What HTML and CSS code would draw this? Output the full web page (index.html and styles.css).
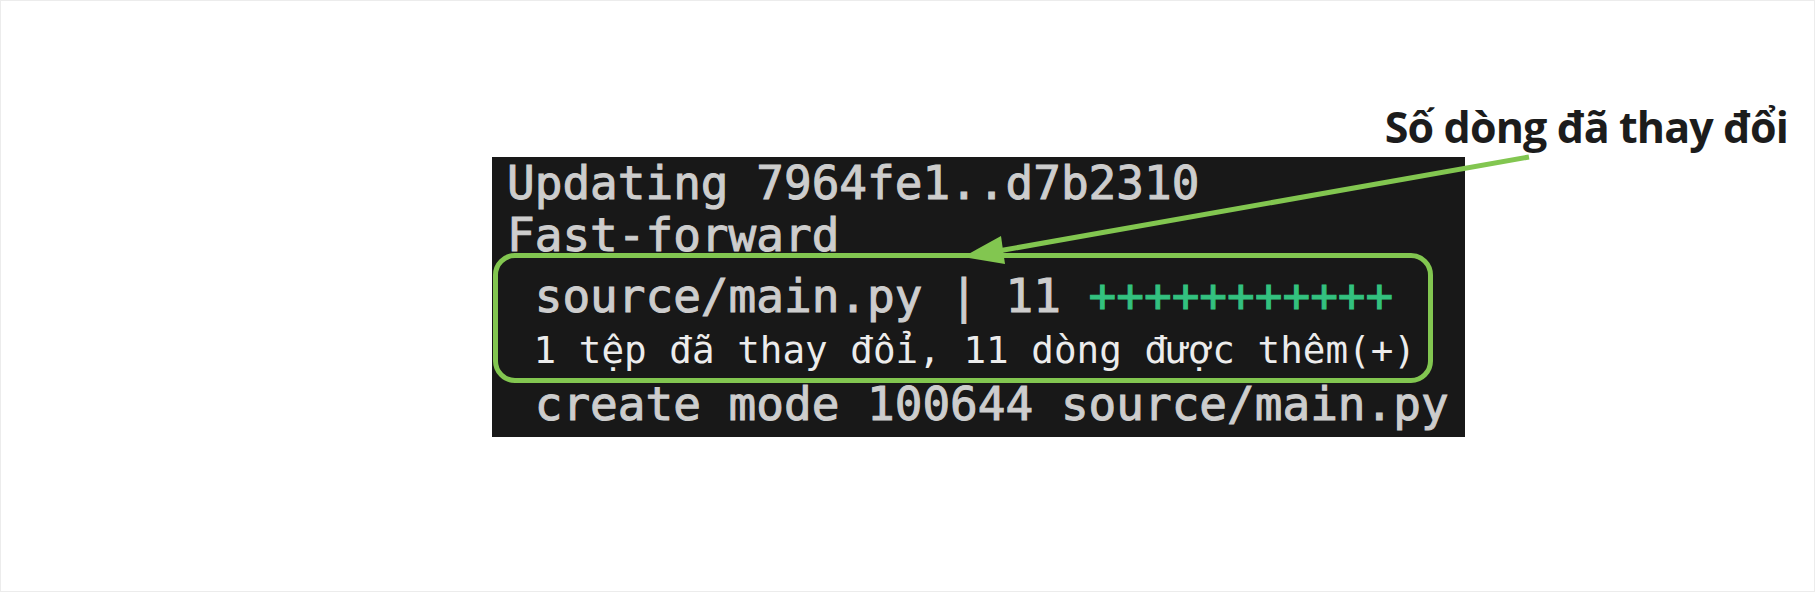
FILE: index.html
```html
<!DOCTYPE html>
<html lang="vi">
<head>
<meta charset="utf-8">
<title>git pull</title>
<link rel="stylesheet" href="styles.css">
</head>
<body>
<div class="page">
  <div class="label">S&#x1ED1; dòng &#x111;ã thay &#x111;&#x1ED5;i</div>
  <div class="terminal">
    <div class="line l1">Updating 7964fe1..d7b2310</div>
    <div class="line l2">Fast-forward</div>
    <div class="highlight">
      <div class="line l3"> source/main.py | 11 <span class="plus">+++++++++++</span></div>
      <div class="line l4"> 1 t&#x1EC7;p &#x111;ã thay &#x111;&#x1ED5;i, 11 dòng &#x111;&#x1B0;&#x1EE3;c thêm(+)</div>
    </div>
    <div class="line l5"> create mode 100644 source/main.py</div>
  </div>
  <svg class="arrow" width="1815" height="592" viewBox="0 0 1815 592" aria-hidden="true">
    <line x1="1528" y1="156" x2="1000" y2="249.5" stroke="#82c650" stroke-width="5" stroke-linecap="butt"/>
    <polygon points="962,256 1000,235 1004,263" fill="#82c650"/>
  </svg>
</div>
</body>
</html>
```

FILE: styles.css
```css
html, body {
  margin: 0;
  padding: 0;
  background: #ffffff;
}

.page {
  position: relative;
  box-sizing: border-box;
  width: 1815px;
  height: 592px;
  border: 1px solid #ececec;
  padding-top: 104px;
  display: flex;
  flex-direction: column;
}

.label {
  align-self: flex-end;
  margin-right: 26px;
  font-family: "Open Sans", "Noto Sans", sans-serif;
  font-weight: 700;
  font-size: 43px;
  line-height: 43px;
  letter-spacing: -0.9px;
  color: #1c1c1c;
  margin-bottom: 9px;
  white-space: nowrap;
}

.terminal {
  margin-left: 491px;
  width: 973px;
  height: 280px;
  box-sizing: border-box;
  background: #181818;
  padding-left: 15px;
  font-family: "DejaVu Sans Mono", "Liberation Mono", monospace;
  color: #cdcdcd;
  overflow: hidden;
}

.line {
  white-space: pre;
  font-size: 46px;
  line-height: 52px;
  font-weight: 400;
  -webkit-text-stroke: 1px currentColor;
}

.highlight {
  margin-left: -14px;
  width: 940px;
  box-sizing: border-box;
  border: 5px solid #82c650;
  border-radius: 22px;
  padding: 12px 0 6px 9px;
  margin-top: -8px;
}

.l4 {
  font-size: 37.6px;
  line-height: 44px;
  margin-top: 6px;
  padding-left: 4px;
  color: #ececec;
  -webkit-text-stroke: 0;
}

.l5 {
  line-height: 44px;
  margin-top: -1px;
}

.plus {
  color: #33c17f;
}

.arrow {
  position: absolute;
  left: 0;
  top: 0;
  pointer-events: none;
}
```
